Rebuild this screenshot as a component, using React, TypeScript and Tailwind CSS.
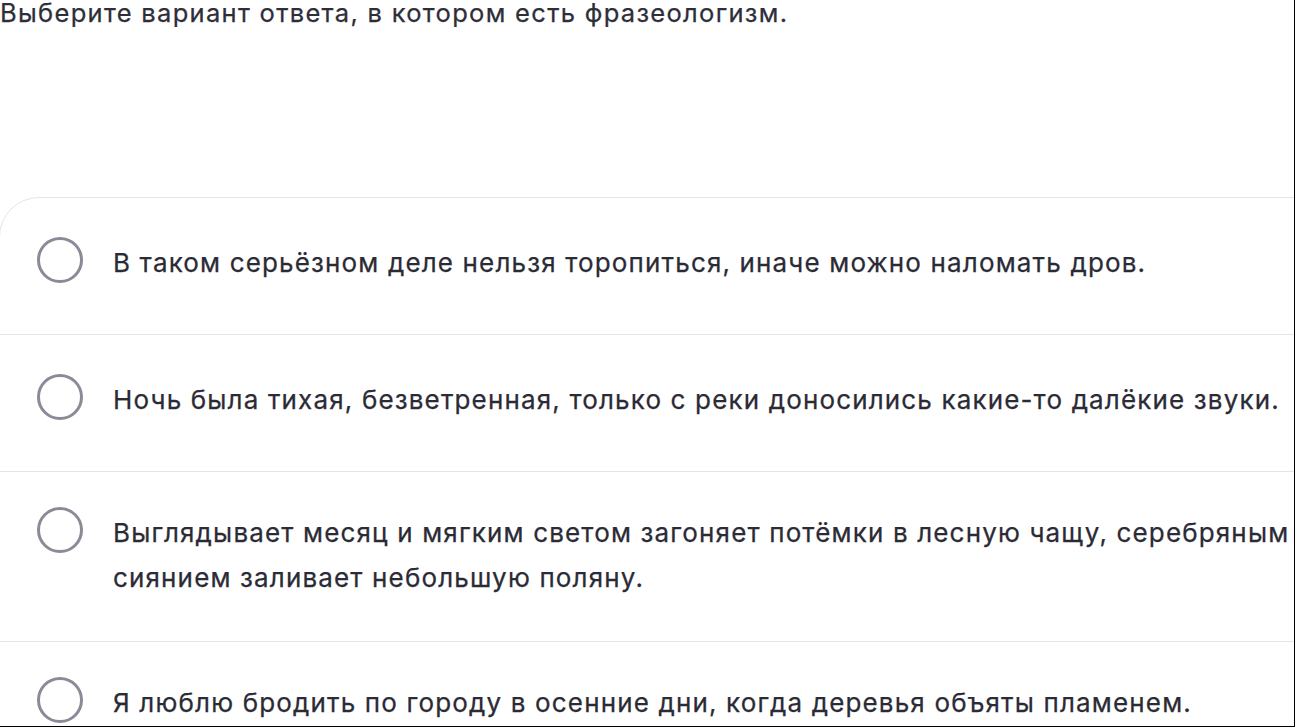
import React from "react";

const rows = [
  { text: "В таком серьёзном деле нельзя торопиться, иначе можно наломать дров.", cls: "pt-[42px] pb-[49px]" },
  { text: "Ночь была тихая, безветренная, только с реки доносились какие-то далёкие звуки.", cls: "pt-[42px] pb-[49px]" },
  { text: "Выглядывает месяц и мягким светом загоняет потёмки в лесную чащу, серебряным сиянием заливает небольшую поляну.", cls: "pt-[38px] pb-[41px]" },
  { text: "Я люблю бродить по городу в осенние дни, когда деревья объяты пламенем.", cls: "pt-[38px] pb-[41px]" },
];

export default function App() {
  return (
    <div
      className="w-[1295px] h-[727px] overflow-hidden bg-white border-r border-b border-black"
      style={{ fontFamily: "Inter, 'Noto Sans', sans-serif" }}
    >
      <h1 className="text-[25.5px] leading-[26px] tracking-[1.3px] text-[#2e2e38] font-normal [-webkit-text-stroke:0.25px_#2e2e38]">
        Выберите вариант ответа, в котором есть фразеологизм.
      </h1>
      <div className="mt-[171px] ml-[-1px] w-[1500px] border border-[#e4e4e7] rounded-tl-[40px]">
        {rows.map((r, i) => (
          <div
            key={i}
            className={`flex items-start ${r.cls} ${i < rows.length - 1 ? "border-b border-[#e4e4e7]" : ""}`}
          >
            <div className="ml-[37px] mt-[-3px] w-[46px] h-[46px] shrink-0 rounded-full border-[3.5px] border-[#8b8a96]" />
            <div className="ml-[30px] w-[1200px] text-[26px] leading-[45px] tracking-[1.15px] text-[#2b2b36] [-webkit-text-stroke:0.25px_#2b2b36]">
              {r.text}
            </div>
          </div>
        ))}
      </div>
    </div>
  );
}
